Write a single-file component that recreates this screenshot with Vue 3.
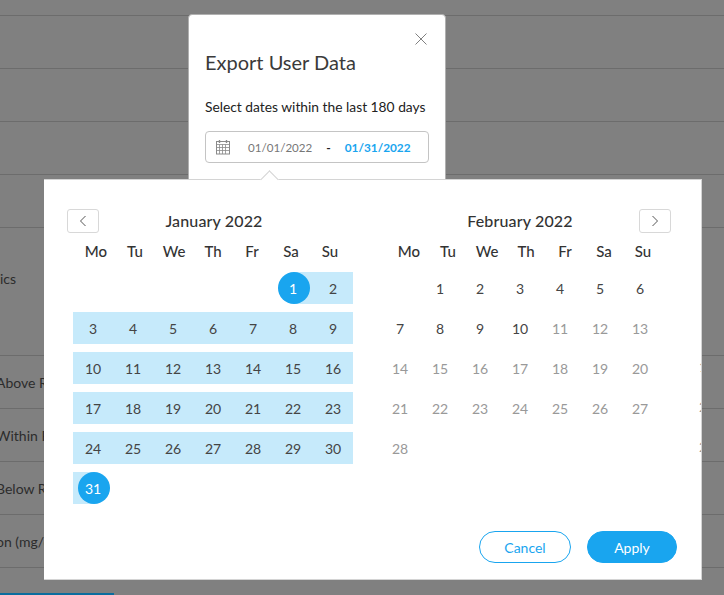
<script setup>
const weekdays = ['Mo', 'Tu', 'We', 'Th', 'Fr', 'Sa', 'Su']
const janRows = [
  [null, null, null, null, null, 1, 2],
  [3, 4, 5, 6, 7, 8, 9],
  [10, 11, 12, 13, 14, 15, 16],
  [17, 18, 19, 20, 21, 22, 23],
  [24, 25, 26, 27, 28, 29, 30],
  [31]
]
const febRows = [
  [null, 1, 2, 3, 4, 5, 6],
  [7, 8, 9, 10, 11, 12, 13],
  [14, 15, 16, 17, 18, 19, 20],
  [21, 22, 23, 24, 25, 26, 27],
  [28]
]
const febClass = (d) => (d && d <= 10 ? 'day' : 'day muted')
const janClass = (d) => {
  if (!d) return 'day'
  if (d === 1) return 'day in-range start'
  if (d === 31) return 'day in-range end'
  return 'day in-range'
}
const ghostRows = ['1', '2', '2']
const bgRowsTop = 4
const bgLabels = [
  { text: 'ics', cls: 'tall' },
  { text: 'Above R', cls: '' },
  { text: 'Within R', cls: '' },
  { text: 'Below R', cls: '' },
  { text: 'on (mg/d', cls: '' }
]
</script>

<template>
  <div class="page">
    <div class="bg">
      <div class="bg-top"></div>
      <div v-for="n in bgRowsTop" :key="n" class="bg-row"></div>
      <div v-for="item in bgLabels" :key="item.text" class="bg-row" :class="item.cls">
        <span class="bg-label">{{ item.text }}</span>
      </div>
      <div class="bg-bar"></div>
    </div>

    <section class="modal">
      <button class="close" aria-label="Close">
        <svg width="12" height="12" viewBox="0 0 12 12"><path d="M.5.5l11 11M11.5.5l-11 11" stroke="#808080" stroke-width="1" fill="none" /></svg>
      </button>
      <h1 class="title">Export User Data</h1>
      <p class="hint">Select dates within the last 180 days</p>
      <div class="range">
        <svg class="cal" width="16" height="16" viewBox="0 0 16 16" fill="none" stroke="#8a8a8a" stroke-width="1">
          <rect x="1.5" y="2.5" width="13" height="12.5" fill="#fff" />
          <path d="M1.5 5.5h13M1.5 8.5h13M1.5 11.5h13M4.5 5.5V15M7.5 5.5V15M10.5 5.5V15" stroke-width=".8" />
          <path d="M4.5 1v3M11.5 1v3" stroke-width="1.4" />
        </svg>
        <span class="from">01/01/2022</span>
        <span class="dash">-</span>
        <span class="to">01/31/2022</span>
      </div>
    </section>

    <section class="picker">
      <span class="arrow"></span>
      <div class="months">
        <div class="month jan">
          <div class="month-head">
            <button class="nav" aria-label="Previous">
              <svg width="8" height="12" viewBox="0 0 8 12"><path d="M6.5 1L1.5 6l5 5" stroke="#555" fill="none" /></svg>
            </button>
            <span class="month-name">January 2022</span>
          </div>
          <div class="weekdays">
            <span v-for="w in weekdays" :key="w">{{ w }}</span>
          </div>
          <div v-for="(row, i) in janRows" :key="i" class="week">
            <span v-for="(d, j) in row" :key="j" :class="janClass(d)"><i v-if="d">{{ d }}</i></span>
          </div>
        </div>
        <div class="month feb">
          <div class="month-head">
            <span class="month-name">February 2022</span>
            <button class="nav" aria-label="Next">
              <svg width="8" height="12" viewBox="0 0 8 12"><path d="M1.5 1l5 5-5 5" stroke="#555" fill="none" /></svg>
            </button>
          </div>
          <div class="weekdays">
            <span v-for="w in weekdays" :key="w">{{ w }}</span>
          </div>
          <div v-for="(row, i) in febRows" :key="i" class="week">
            <span v-for="(d, j) in row" :key="j" :class="febClass(d)"><i v-if="d">{{ d }}</i></span>
          </div>
        </div>
        <div class="ghost">
          <span v-for="(g, i) in ghostRows" :key="i">{{ g }}</span>
        </div>
      </div>
      <div class="actions">
        <button class="btn cancel">Cancel</button>
        <button class="btn apply">Apply</button>
      </div>
    </section>
  </div>
</template>

<style>
html, body { margin: 0; background: #808080; }
</style>

<style scoped>
.page {
  position: relative;
  width: 724px;
  height: 595px;
  overflow: hidden;
  background: #808080;
  font-family: Lato, "Liberation Sans", sans-serif;
  color: #333;
}
.bg { display: flex; flex-direction: column; }
.bg-top { height: 15px; border-bottom: 1px solid #6c6c6c; }
.bg-row {
  height: 52px;
  border-bottom: 1px solid #6c6c6c;
  display: flex;
  align-items: center;
  font-size: 14px;
  color: #2c2c2c;
  white-space: nowrap;
}
.bg-row.tall { height: 127px; }
.bg-label { display: block; margin-left: -4px; }
.bg-row.tall .bg-label { margin: -26px 0 0 0; }
.bg-bar {
  position: absolute;
  left: 0;
  bottom: 0;
  width: 114px;
  height: 2px;
  background: #0b6d9e;
}
.modal {
  position: absolute;
  left: 188px;
  top: 14px;
  width: 258px;
  height: 180px;
  box-sizing: border-box;
  padding: 35px 16px 0;
  background: #fff;
  border-radius: 4px;
  border: 1px solid #b0b0b0;
}
.close {
  position: absolute;
  top: 18px;
  right: 18px;
  padding: 0;
  border: 0;
  background: none;
  display: flex;
}
.title {
  margin: 0;
  font-size: 20px;
  line-height: 24px;
  font-weight: 400;
  color: #3a3a3a;
}
.hint {
  margin: 24px 0 0;
  font-size: 13.8px;
  line-height: 18px;
  color: #222;
  white-space: nowrap;
}
.range {
  margin-top: 15px;
  height: 32px;
  width: 224px;
  box-sizing: border-box;
  border: 1px solid #c4c4c4;
  border-radius: 4px;
  display: flex;
  align-items: center;
  padding-left: 9px;
  white-space: nowrap;
}
.cal { flex: none; }
.from { margin-left: 17px; color: #777; font-size: 11.6px; }
.dash { margin-left: 14px; color: #222; font-weight: 700; font-size: 12px; }
.to { margin-left: 14px; color: #19a5ef; font-weight: 700; font-size: 11.8px; }
.picker {
  position: absolute;
  left: 44px;
  top: 179px;
  width: 658px;
  height: 401px;
  box-sizing: border-box;
  background: #fff;
  border: 1px solid #d4d4d4;
  border-left: 0;
}
.arrow {
  position: absolute;
  left: 219px;
  top: -7px;
  width: 12px;
  height: 12px;
  background: #fff;
  border-left: 1px solid #d4d4d4;
  border-top: 1px solid #d4d4d4;
  transform: rotate(45deg);
}
.months {
  position: relative;
  display: flex;
  height: 340px;
  overflow: hidden;
}
.month { width: 280px; flex: none; }
.jan { margin-left: 29px; }
.feb { margin-left: 27px; }
.month-head {
  position: relative;
  height: 24px;
  margin-top: 28px;
  display: flex;
  align-items: center;
  justify-content: center;
}
.jan .month-head { padding-left: 2px; }
.month-name { font-size: 16px; font-weight: 500; color: #333; letter-spacing: .15px; }
.nav {
  position: absolute;
  top: 1px;
  width: 32px;
  height: 24px;
  padding: 0;
  display: flex;
  align-items: center;
  justify-content: center;
  box-sizing: border-box;
  background: #fff;
  border: 1px solid #d8d8d8;
  border-radius: 3px;
}
.jan .nav { left: -6px; }
.feb .nav { right: -11px; }
.weekdays {
  display: grid;
  grid-template-columns: repeat(7, 39px);
  padding-left: 3.5px;
  margin-top: 7px;
  height: 24px;
  align-items: center;
  text-align: center;
  font-size: 15px;
  font-weight: 500;
  color: #333;
}
.feb .weekdays { padding-left: 9.5px; }
.week {
  display: grid;
  grid-template-columns: repeat(7, 40px);
  height: 32px;
  margin-bottom: 8px;
}
.weekdays + .week { margin-top: 9px; }
.day {
  position: relative;
  display: flex;
  align-items: center;
  justify-content: center;
  font-size: 14px;
  color: #444;
}
.day i { position: relative; font-style: normal; }
.day.muted { color: #999; }
.in-range { background: #c6eafb; }
.start { background: linear-gradient(90deg, #fff 50%, #c6eafb 50%); }
.end { background: linear-gradient(90deg, #c6eafb 50%, #fff 50%); }
.start::before, .end::before {
  content: "";
  position: absolute;
  left: 5px;
  top: 0;
  width: 32px;
  height: 32px;
  border-radius: 50%;
  background: #19a5ef;
}
.start i, .end i { color: #fff; }
.ghost {
  position: absolute;
  left: 655px;
  top: 171px;
  display: flex;
  flex-direction: column;
  font-size: 14px;
  color: #999;
}
.ghost span { height: 40px; line-height: 32px; }
.actions {
  display: flex;
  justify-content: flex-end;
  gap: 16px;
  padding-right: 24px;
  margin-top: 11px;
}
.btn {
  width: 92px;
  height: 32px;
  box-sizing: border-box;
  border-radius: 16px;
  font: 400 14px Lato, "Liberation Sans", sans-serif;
  border: 1px solid #19a5ef;
  padding: 0;
}
.cancel { background: #fff; color: #19a5ef; }
.apply { background: #19a5ef; color: #fff; width: 90px; }
</style>
